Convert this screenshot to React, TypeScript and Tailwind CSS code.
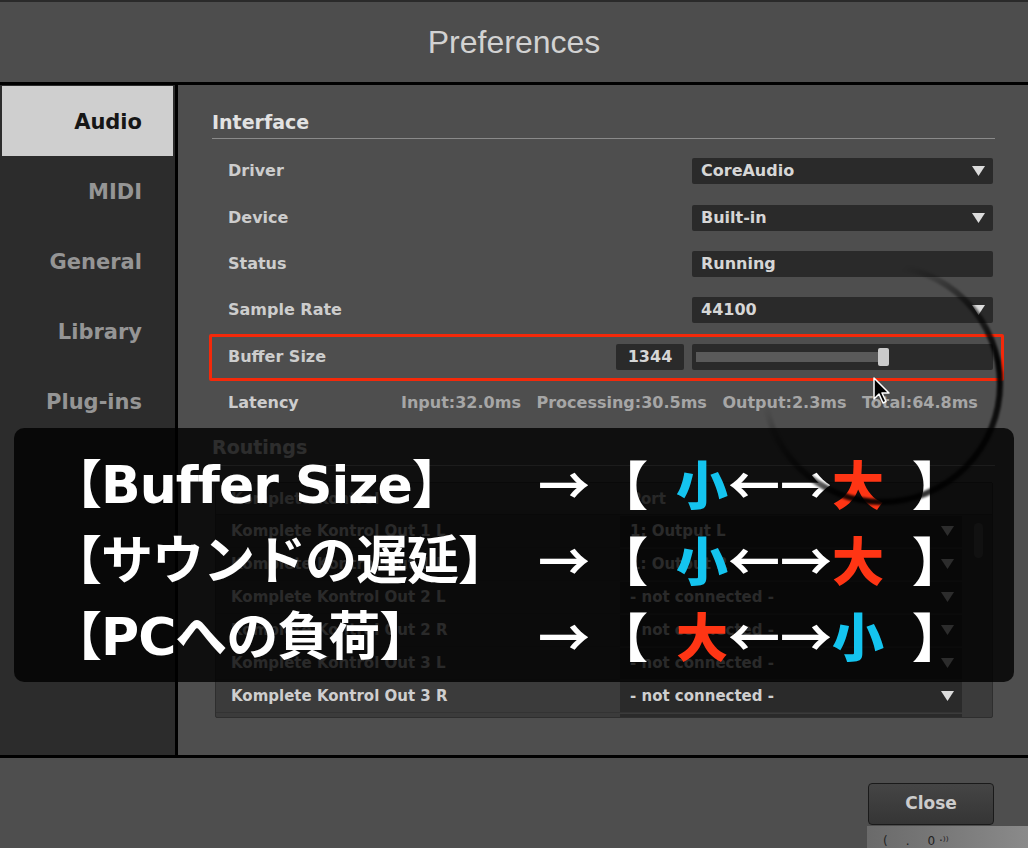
const ui = "font-['DejaVu_Sans',sans-serif]";

function Caret() {
  return (
    <svg width="13" height="10" viewBox="0 0 13 10" className="shrink-0">
      <path d="M0 0 H13 L6.5 10 Z" fill="#dcdcdc" />
    </svg>
  );
}

function Select({ value, caret = true }: { value: string; caret?: boolean }) {
  return (
    <div className="flex h-[26px] w-[301px] items-center justify-between rounded-[2px] bg-[#2a2a2a] pl-[9px] pr-[8px] text-[16px] font-bold text-[#d6d6d6]">
      <span>{value}</span>
      {caret && <Caret />}
    </div>
  );
}

const settings: { label: string; value: string; caret?: boolean }[] = [
  { label: 'Driver', value: 'CoreAudio' },
  { label: 'Device', value: 'Built-in' },
  { label: 'Status', value: 'Running', caret: false },
  { label: 'Sample Rate', value: '44100' },
];

const routes = [
  ['Komplete Kontrol Out 1 L', '1: Output L'],
  ['Komplete Kontrol Out 1 R', '1: Output R'],
  ['Komplete Kontrol Out 2 L', '- not connected -'],
  ['Komplete Kontrol Out 2 R', '- not connected -'],
  ['Komplete Kontrol Out 3 L', '- not connected -'],
  ['Komplete Kontrol Out 3 R', '- not connected -'],
  ['Komplete Kontrol Out 4 L', '- not connected -'],
];

const tabs = ['Audio', 'MIDI', 'General', 'Library', 'Plug-ins'];

const cjk = "font-['Noto_Sans_CJK_JP',sans-serif]";

function Scale({ left, right }: { left: 'small' | 'big'; right: 'small' | 'big' }) {
  const glyph = (k: 'small' | 'big') =>
    k === 'small' ? <span className="text-[#14c4ef]">小</span> : <span className="text-[#ff3514]">大</span>;
  return (
    <div className={`flex items-center ${cjk} font-black text-white`}>
      <span className="w-[52px] text-center">【</span>
      <span className="ml-[28px] w-[52px] text-center">{glyph(left)}</span>
      <span className="w-[52px] text-center font-bold">←</span>
      <span className="w-[52px] text-center font-bold">→</span>
      <span className="w-[52px] text-center">{glyph(right)}</span>
      <span className="ml-[28px] w-[52px] text-center">】</span>
    </div>
  );
}

export default function App() {
  return (
    <div className={`relative h-[848px] w-[1028px] overflow-hidden bg-[#4e4e4e] ${ui}`}>
      {/* title bar */}
      <header className="flex h-[85px] items-center justify-center border-t-2 border-b-[3px] border-t-[#2a2a2a] border-b-black bg-[#4d4d4d]">
        <h1 className="font-['Liberation_Sans',sans-serif] text-[32px] text-[#d2d2d2]">Preferences</h1>
      </header>

      <div className="flex h-[670px]">
        {/* sidebar */}
        <nav className="w-[178px] border-r-[3px] border-black bg-[#2c2c2c] px-[2px] pt-px">
          {tabs.map((t, i) => (
            <div
              key={t}
              className={`flex h-[70px] items-center justify-end pr-[31px] pt-[4px] text-[21px] font-bold ${
                i === 0 ? 'bg-[#cfcfcf] text-[#161616]' : 'text-[#959595]'
              }`}
            >
              {t}
            </div>
          ))}
        </nav>

        {/* content */}
        <main className="flex-1 pl-[34px] pr-[33px] pt-[25px]">
          <h2 className="border-b border-[#8a8a8a] pb-[4px] text-[19px] leading-[24px] font-bold text-[#e2e2e2]">Interface</h2>
          <div className="pt-[9px]">
            {settings.map((s) => (
              <div key={s.label} className="flex h-[46.4px] items-center justify-between pl-[16px] pr-[2px]">
                <span className="text-[16px] font-bold text-[#cdcdcd]">{s.label}</span>
                <Select value={s.value} caret={s.caret !== false} />
              </div>
            ))}
            <div className="flex h-[46.4px] items-center justify-between pl-[16px] pr-[2px]">
              <span className="text-[16px] font-bold text-[#cdcdcd]">Buffer Size</span>
              <div className="flex items-center gap-[8px]">
                <div className="flex h-[26px] w-[68px] items-center justify-center rounded-[2px] bg-[#2a2a2a] text-[16px] font-bold text-[#d6d6d6]">
                  1344
                </div>
                <div className="flex h-[26px] w-[301px] items-center rounded-[2px] bg-[#2a2a2a] pl-[4px]">
                  <div className="h-[10px] w-[186px] bg-[#5a5a5a]" />
                  <div className="-ml-[4px] h-[18px] w-[11px] rounded-[2px] bg-[#cacaca]" />
                </div>
              </div>
            </div>
            <div className="flex h-[46.4px] items-center pl-[16px]">
              <span className="w-[173px] shrink-0 text-[16px] font-bold text-[#cdcdcd]">Latency</span>
              <span className="overflow-hidden whitespace-nowrap text-[16px] font-bold text-[#a6a6a6] [word-spacing:10px]">
                Input:32.0ms Processing:30.5ms Output:2.3ms Total:64.8ms
              </span>
            </div>
          </div>

          <h2 className="mt-[9px] border-b border-[#8a8a8a] pb-[6px] text-[19px] leading-[24px] font-bold text-[#e2e2e2]">Routings</h2>

          <div className="ml-[3px] mr-[2px] mt-[16px] h-[236px] overflow-hidden rounded-[2px] border border-[#2e2e2e] bg-[#3b3b3b]">
            <div className="flex h-[32px] items-center border-b border-[#2e2e2e] bg-[#444444] text-[15px] font-bold text-[#c8c8c8]">
              <span className="w-[404px] pl-[15px]">Komplete Kontrol</span>
              <span className="pl-[10px]">Port</span>
            </div>
            <div className="flex">
              <div className="flex-1">
                {routes.map(([name, port]) => (
                  <div key={name} className="flex h-[33px] items-center border-b border-[#333333]">
                    <span className="w-[404px] pl-[15px] text-[15px] font-bold text-[#cfcfcf]">{name}</span>
                    <div className="flex h-[31px] w-[342px] items-center justify-between bg-[#2a2a2a] pl-[10px] pr-[8px] text-[15px] font-bold text-[#cfcfcf]">
                      <span>{port}</span>
                      <Caret />
                    </div>
                  </div>
                ))}
              </div>
              <div className="w-[30px] pt-[8px] pl-[12px]">
                <div className="h-[35px] w-[9px] rounded-full bg-[#555555]" />
              </div>
            </div>
          </div>
        </main>
      </div>

      {/* footer */}
      <footer className="flex h-[93px] justify-end border-t-[3px] border-black bg-[#4e4e4e] pr-[34px] pt-[25px]">
        <button className="h-[42px] w-[126px] rounded-[4px] border border-[#1a1a1a] bg-gradient-to-b from-[#454545] to-[#353535] text-[17px] font-bold text-[#cccccc]">
          Close
        </button>
      </footer>
      <div className="absolute bottom-0 right-0 flex h-[22px] w-[161px] items-end gap-[18px] bg-gradient-to-r from-[#6a6a6a] to-[#8a8a8a] pl-[16px] text-[12px] leading-[14px] text-[#222]">
        <span>(</span>
        <span>.</span>
        <span>0 ·⁾⁾</span>
      </div>

      {/* red highlight */}
      <div className="absolute left-[209px] top-[334px] h-[47px] w-[795px] rounded-[2px] border-[3px] border-[#f4290a]" />

      {/* annotation overlay */}
      <div className="absolute left-[14px] top-[428px] h-[254px] w-[1000px] rounded-[10px] bg-black/80 pt-[17px] text-[52px] leading-[76px]">
        {[
          { label: 'Buffer Size', l: 'small' as const, r: 'big' as const },
          { label: 'サウンドの遅延', l: 'small' as const, r: 'big' as const },
          { label: 'PCへの負荷', l: 'big' as const, r: 'small' as const },
        ].map((row) => (
          <div key={row.label} className="flex h-[76px] items-center pl-[36px]">
            <span className="w-[488px] font-['DejaVu_Sans','Noto_Sans_CJK_JP',sans-serif] font-bold tracking-[-1px] text-white">
              <span className={cjk}>【</span>
              {row.label}
              <span className={cjk}>】</span>
            </span>
            <span className={`w-[52px] text-center ${cjk} font-bold text-white`}>→</span>
            <span className="w-[6px]" />
            <Scale left={row.l} right={row.r} />
          </div>
        ))}
      </div>

      {/* click ring */}
      <svg className="absolute left-[752px] top-[254px] blur-[1px]" width="260" height="260" viewBox="0 0 260 260">
        <defs>
          <linearGradient id="ring" x1="0" y1="0" x2="1" y2="1">
            <stop offset="0.3" stopColor="#000" stopOpacity="0" />
            <stop offset="0.7" stopColor="#000" stopOpacity="0.95" />
            <stop offset="1" stopColor="#000" stopOpacity="0.6" />
          </linearGradient>
        </defs>
        <circle cx="130" cy="130" r="118" fill="none" stroke="url(#ring)" strokeWidth="6" />
      </svg>

      {/* cursor */}
      <svg className="absolute left-[873px] top-[377px]" width="20" height="28" viewBox="0 0 20 28">
        <path d="M1 1 L1 22 L6 17 L10 26 L13 24.5 L9 16 L16 16 Z" fill="#000" stroke="#fff" strokeWidth="1.5" strokeLinejoin="round" />
      </svg>
    </div>
  );
}
